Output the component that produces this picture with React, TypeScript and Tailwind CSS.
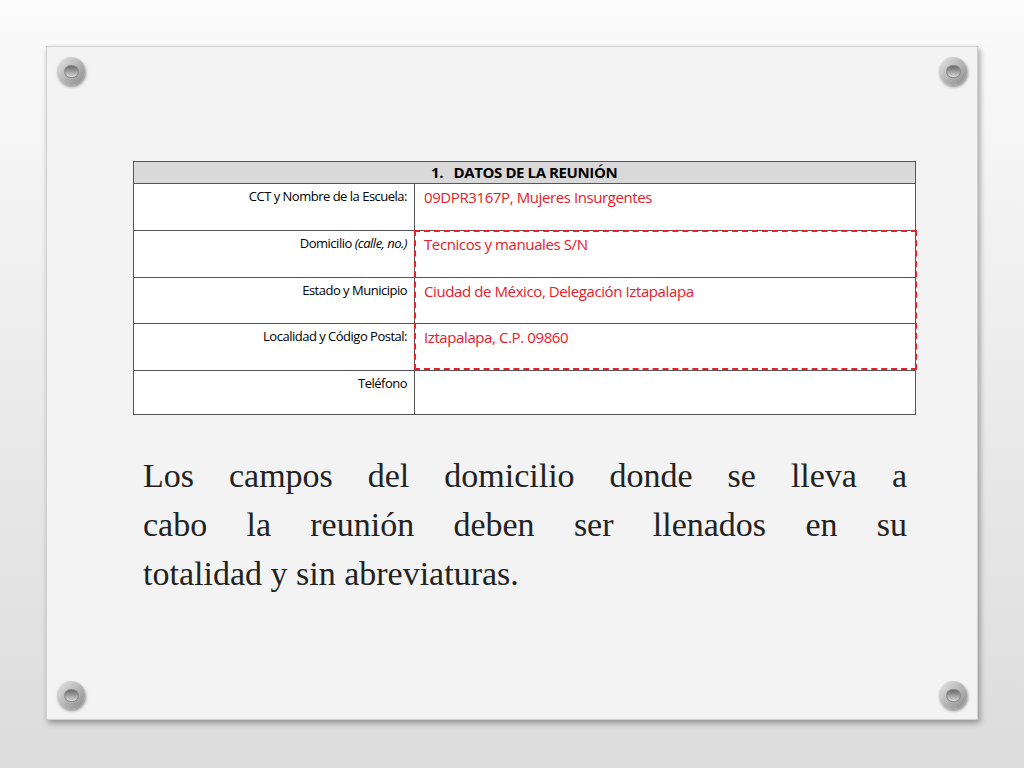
function Rivet() {
  return (
    <div className="w-[28px] h-[28px] rounded-full bg-gradient-to-br from-[#e8e8e8] to-[#8a8a8a] shadow-[1px_2px_3px_rgba(0,0,0,0.4)] flex items-center justify-center">
      <div className="w-[15px] h-[13px] rounded-full bg-gradient-to-b from-[#6a6a6a] to-[#d8d8d8] border border-[#888]" />
    </div>
  );
}

const rows: { label: React.ReactNode; value: string; h: string }[] = [
  { label: 'CCT y Nombre de la Escuela:', value: '09DPR3167P, Mujeres Insurgentes', h: 'h-[47px]' },
  { label: <>Domicilio <i>(calle, no.)</i></>, value: 'Tecnicos y manuales S/N', h: 'h-[47px]' },
  { label: 'Estado y Municipio', value: 'Ciudad de México, Delegación Iztapalapa', h: 'h-[46px]' },
  { label: 'Localidad y Código Postal:', value: 'Iztapalapa, C.P. 09860', h: 'h-[47px]' },
  { label: 'Teléfono', value: '', h: 'h-[43px]' },
];

export default function App() {
  return (
    <div className="w-[1024px] h-[768px] bg-gradient-to-b from-[#fbfbfb] to-[#dcdcdc] pt-[46px] pl-[46px]">
      <div className="relative w-[932px] h-[674px] bg-[#f3f3f3] border border-[#d0d0d0] shadow-[2px_3px_6px_rgba(0,0,0,0.35)] pt-[114px] pl-[86px]">
        <div className="absolute left-[10px] top-[10px]"><Rivet /></div>
        <div className="absolute right-[10px] top-[10px]"><Rivet /></div>
        <div className="absolute left-[10px] bottom-[10px]"><Rivet /></div>
        <div className="absolute right-[10px] bottom-[10px]"><Rivet /></div>

        <div className="relative w-[783px] border border-[#555] bg-white" style={{ fontFamily: '"Open Sans", "Liberation Sans", sans-serif' }}>
          <div className="h-[22px] bg-[#d9d9d9] border-b border-[#555] pl-[297px] text-[15px] font-bold leading-[21px] text-black tracking-[-0.4px]">
            1.&nbsp;&nbsp; DATOS DE LA REUNIÓN
          </div>
          {rows.map((r, i) => (
            <div key={i} className={`flex ${r.h} ${i < rows.length - 1 ? 'border-b border-[#555]' : ''}`}>
              <div className="w-[281px] border-r border-[#555] text-right pr-[7px] pt-[3px] text-[13px] text-black tracking-[-0.5px]">{r.label}</div>
              <div className="flex-1 pl-[9px] pt-[2px] text-[15px] text-[#e8202a] tracking-[-0.4px]">{r.value}</div>
            </div>
          ))}
          <div className="absolute left-[280px] top-[68px] w-[503px] h-[140px] border-2 border-dashed border-[#e8202a]" />
        </div>

        <div className="w-[764px] ml-[10px] mt-[36px] text-[34px] leading-[49px] text-[#222]" style={{ fontFamily: '"Liberation Serif", serif' }}>
          <p className="text-justify [text-align-last:justify]">Los campos del domicilio donde se lleva a</p>
          <p className="text-justify [text-align-last:justify]">cabo la reunión deben ser llenados en su</p>
          <p>totalidad y sin abreviaturas.</p>
        </div>
      </div>
    </div>
  );
}
